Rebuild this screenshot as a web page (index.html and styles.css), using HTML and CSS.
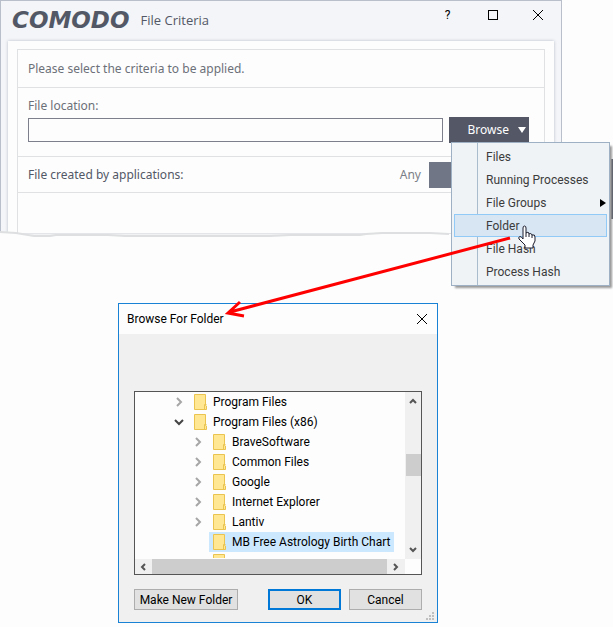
FILE: index.html
```html
<!DOCTYPE html>
<html lang="en">
<head>
<meta charset="utf-8">
<title>File Criteria</title>
<link rel="stylesheet" href="styles.css">
</head>
<body>
<main class="stage">
  <section class="window">
    <header class="titlebar">
      <span class="brand">COMODO</span>
      <h1 class="title">File Criteria</h1>
      <div class="window-controls">
        <button class="icon-button help" type="button" aria-label="Help">?</button>
        <button class="icon-button" type="button" aria-label="Maximize"><svg width="10" height="10" viewBox="0 0 10 10"><rect x="0.5" y="0.5" width="9" height="9"/></svg></button>
        <button class="icon-button" type="button" aria-label="Close"><svg width="10" height="10" viewBox="0 0 10 10"><path d="M0 0L10 10M10 0L0 10"/></svg></button>
      </div>
    </header>
    <div class="sheet">
      <div class="criteria">
        <p class="row intro">Please select the criteria to be applied.</p>
        <div class="row location">
          <label for="location">File location:</label>
          <div class="location-line">
            <input id="location" class="path" type="text">
            <div class="browse-wrap">
              <button class="browse" type="button">Browse<svg width="8" height="6" viewBox="0 0 8 6"><path d="M0 0H8L4 6Z"/></svg></button>
              <div class="menu">
                <button type="button">Files</button>
                <button type="button">Running Processes</button>
                <button type="button">File Groups<svg width="6" height="8" viewBox="0 0 6 8"><path d="M0 0L6 4L0 8Z"/></svg></button>
                <button type="button" class="active">Folder</button>
                <button type="button">File Hash</button>
                <button type="button">Process Hash</button>
              </div>
            </div>
          </div>
        </div>
        <div class="row created">
          <span>File created by applications:</span>
          <span class="any">Any</span>
          <button class="choose" type="button" aria-label="Choose applications"></button>
        </div>
      </div>
    </div>
    <svg class="torn" viewBox="0 0 562 12" preserveAspectRatio="none" aria-hidden="true">
      <path class="torn-paper" d="M0 3L16 4L34 7H50L56 6H108L125 7H270L290 6H360L366 5L382 4H430L449 5H562V12H0Z"/>
      <path class="torn-edge" d="M0 3L16 4L34 7H50L56 6H108L125 7H270L290 6H360L366 5L382 4H430L449 5"/>
    </svg>
  </section>

  <section class="dialog">
    <header class="dialog-title">
      <h2>Browse For Folder</h2>
      <button class="icon-button" type="button" aria-label="Close"><svg width="10" height="10" viewBox="0 0 10 10"><path d="M0 0L10 10M10 0L0 10"/></svg></button>
    </header>
    <div class="tree">
      <ul class="folders">
        <li><svg class="chevron" viewBox="0 0 10 10"><path d="M3 1L7 5L3 9"/></svg><svg class="folder"><use href="#folder"/></svg><span>Program Files</span></li>
        <li><svg class="chevron open" viewBox="0 0 10 10"><path d="M1 3L5 7L9 3"/></svg><svg class="folder"><use href="#folder"/></svg><span>Program Files (x86)</span></li>
        <li class="child"><svg class="chevron" viewBox="0 0 10 10"><path d="M3 1L7 5L3 9"/></svg><svg class="folder"><use href="#folder"/></svg><span>BraveSoftware</span></li>
        <li class="child"><svg class="chevron" viewBox="0 0 10 10"><path d="M3 1L7 5L3 9"/></svg><svg class="folder"><use href="#folder"/></svg><span>Common Files</span></li>
        <li class="child"><svg class="chevron" viewBox="0 0 10 10"><path d="M3 1L7 5L3 9"/></svg><svg class="folder"><use href="#folder"/></svg><span>Google</span></li>
        <li class="child"><svg class="chevron" viewBox="0 0 10 10"><path d="M3 1L7 5L3 9"/></svg><svg class="folder"><use href="#folder"/></svg><span>Internet Explorer</span></li>
        <li class="child"><svg class="chevron" viewBox="0 0 10 10"><path d="M3 1L7 5L3 9"/></svg><svg class="folder"><use href="#folder"/></svg><span>Lantiv</span></li>
        <li class="child selected"><svg class="chevron"></svg><div class="pick"><svg class="folder"><use href="#folder"/></svg><span>MB Free Astrology Birth Chart</span></div></li>
        <li class="child"><svg class="chevron"></svg><svg class="folder"><use href="#folder"/></svg></li>
      </ul>
      <div class="vscroll">
        <svg width="8" height="6" viewBox="0 0 8 6"><path d="M1 5L4 2L7 5"/></svg>
        <div class="vthumb"></div>
        <svg width="8" height="6" viewBox="0 0 8 6"><path d="M1 1L4 4L7 1"/></svg>
      </div>
      <div class="hscroll">
        <svg width="6" height="8" viewBox="0 0 6 8"><path d="M5 1L2 4L5 7"/></svg>
        <div class="hthumb"></div>
        <svg width="6" height="8" viewBox="0 0 6 8"><path d="M1 1L4 4L1 7"/></svg>
      </div>
    </div>
    <footer class="actions">
      <button class="push wide" type="button">Make New Folder</button>
      <button class="push primary" type="button">OK</button>
      <button class="push" type="button">Cancel</button>
    </footer>
    <svg class="grip" width="8" height="8" viewBox="0 0 8 8" aria-hidden="true"><path d="M6 0h2v2h-2zM3 3h2v2h-2zM6 3h2v2h-2zM0 6h2v2h-2zM3 6h2v2h-2zM6 6h2v2h-2z"/></svg>
  </section>

  <div class="backdrop-sliver"></div>
  <svg class="arrow" width="613" height="330" viewBox="0 0 613 330" aria-hidden="true">
    <path d="M510 238L230 312M240 302L228 313L244 316"/>
  </svg>
  <svg class="pointer" width="18" height="24" viewBox="0 0 18 24" aria-hidden="true">
    <path d="M5 14V3Q5 1 6.500 1T8 3V8Q9 7 10.500 7.500L11 9Q12 8 13.500 9L14 10Q17 9 17 12V16L15 20V23H7V20L1 14Q0 12 2 11.500Q3.500 11.500 5 14Z"/>
    <path d="M8 8V12M11 9V12M14 10V13"/>
  </svg>
</main>
<svg class="symbols" width="0" height="0" aria-hidden="true">
  <symbol id="folder" viewBox="0 0 13 16"><path d="M.5 .5H11.500V11.500L12.500 12V15.500H.5Z" fill="#ffe793" stroke="#ebc450"/><path d="M10.500 15V10.500H12.500" fill="none" stroke="#ebc450"/></symbol>
</svg>
</body>
</html>
```
FILE: styles.css
```css
* { box-sizing: border-box; }
body {
  margin: 0;
  background: #fdfdfd;
  color: #000;
  font: 12px/16px Roboto, "Open Sans", sans-serif;
}
h1, h2, p, ul { margin: 0; padding: 0; font-size: inherit; font-weight: 400; }
button, input { font: inherit; color: inherit; border-radius: 0; }
button { padding: 0; border: 0; background: none; }
.symbols { position: absolute; }
.stage { position: relative; min-height: 100vh; padding-bottom: 4px; overflow: hidden; }

.window {
  position: relative;
  width: 92%;
  max-width: 562px;
  padding: 0 7px;
  background: #f3f5f8;
  border: 1px solid #b9c0cb;
  border-bottom: 0;
}
.titlebar { display: flex; align-items: center; height: 40px; padding: 0 6px 2px 4px; }
.brand { font: italic bold 23px/26px "DejaVu Sans", sans-serif; color: #535866; }
.title { margin-left: 11px; font-family: "Open Sans", sans-serif; font-size: 13px; color: #535866; }
.window-controls { display: flex; gap: 24px; margin-left: auto; padding-bottom: 10px; }
.icon-button { display: grid; place-items: center; width: 21px; height: 20px; }
.icon-button svg { overflow: visible; fill: none; stroke: #000; }
.sheet {
  padding: 8px 9px 0;
  background: #fdfdfd;
  box-shadow: 0 0 3px #b8bec8;
}
.criteria { height: 184px; border: 1px solid #e0e1e3; border-bottom: 0; color: #6c7079; font-family: "Noto Sans", sans-serif; }
.row { padding: 0 10px; border-bottom: 1px solid #e0e1e3; }
.intro { height: 38px; line-height: 38px; }
.location { height: 69px; padding-top: 9px; }
.location label { display: block; line-height: 18px; }
.location-line { display: flex; gap: 6px; margin-top: 2px; }
.path { flex: 1; min-width: 0; height: 24px; margin-top: 1px; border: 1px solid #7d808c; background: #fdfdfd; }
.browse-wrap { position: relative; width: 80px; margin-right: 5px; }
.browse { display: flex; align-items: center; justify-content: flex-end; gap: 9px; width: 100%; height: 26px; padding-right: 3px; background: #535766; color: #fff; }
.browse svg { fill: #fff; }
.menu {
  position: absolute;
  z-index: 2;
  top: 25px;
  left: 2px;
  width: 159px;
  padding: 2px;
  border: 1px solid #9db0c4;
  background: linear-gradient(90deg, transparent 25px, #a9bccd 25px, #a9bccd 26px, transparent 26px) #f0f3f6;
  box-shadow: 3px 3px 2px -1px #999;
  color: #3c3c3c;
  font-family: Roboto, "Open Sans", sans-serif;
}
.menu button { display: flex; align-items: center; justify-content: space-between; width: 100%; height: 23px; padding: 0 0 0 31px; border: 1px solid transparent; }
.menu .active { background: #d8e6f3; border-color: #91c9f7; }
.created { display: flex; align-items: center; height: 36px; color: #535866; }
.any { margin-left: auto; color: #7b7e86; }
.choose { flex: none; width: 105px; height: 26px; margin: 0 0 0 8px; background: #717686; }
.torn { position: absolute; left: -1px; bottom: -8px; width: calc(100% + 2px); height: 12px; }
.torn-paper { fill: #fdfdfd; }
.torn-edge { fill: none; stroke: #dddfe0; stroke-width: 2; }

.dialog {
  position: relative;
  width: 320px;
  margin: 70px 0 0 118px;
  padding: 0 15px 12px;
  border: 1px solid #1982d5;
  background: #f0f0f0;
}
.dialog-title { display: flex; align-items: center; justify-content: space-between; height: 30px; margin: 0 -15px; padding: 0 5px 0 8px; background: #fdfdfd; }
.tree {
  display: grid;
  grid-template: 167px 15px / 1fr 16px;
  margin-top: 57px;
  border: 1px solid #555;
  background: #fdfdfd;
}
.folders { overflow: hidden; height: 166px; list-style: none; }
.folders li { display: flex; align-items: center; height: 20px; padding-left: 39px; white-space: nowrap; }
.folders .child { padding-left: 58px; }
.chevron { width: 10px; height: 10px; margin-right: 10px; fill: none; stroke: #a6a6a6; stroke-width: 2; }
.open { stroke: #444; }
.folder { width: 13px; height: 16px; margin-right: 6px; flex: none; }
.pick { display: flex; align-items: center; height: 20px; margin-left: -4px; padding: 0 4px; background: #cce8ff; }
.vscroll, .hscroll { display: flex; align-items: center; justify-content: space-between; background: #f0f0f0; }
.vscroll { flex-direction: column; padding: 6px 0; }
.vscroll svg, .hscroll svg { fill: none; stroke: #555; stroke-width: 2; }
.vthumb { width: 15px; height: 22px; margin-bottom: 22px; background: #cdcdcd; }
.hscroll { padding: 0 6px 0 5px; gap: 6px; }
.hthumb { flex: 1; height: 15px; background: #cdcdcd; }
.actions { display: flex; margin-top: 14px; gap: 8px; }
.push { width: 73px; height: 21px; border: 1px solid #adadad; background: #e1e1e1; }
.wide { width: 104px; margin-right: auto; }
.primary { border: 2px solid #0078d7; }
.grip { position: absolute; right: 3px; bottom: 2px; fill: #bfbfbf; }

.backdrop-sliver { position: absolute; top: 159px; right: 0; width: 2px; height: 60px; background: #4b4f5b; }
.arrow { position: absolute; z-index: 3; top: 0; left: 0; fill: none; stroke: #f00; stroke-width: 3; pointer-events: none; }
.pointer { position: absolute; z-index: 4; top: 225px; left: 518px; fill: #fff; stroke: #1c1c2c; pointer-events: none; }
```
